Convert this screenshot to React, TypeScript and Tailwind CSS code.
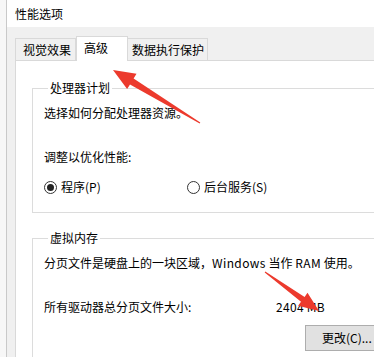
const font = "font-['Microsoft_YaHei','Noto_Sans_CJK_SC',sans-serif]";

function Radio({ checked, label }: { checked?: boolean; label: string }) {
  return (
    <label className="flex items-center gap-[4px]">
      <span className="flex h-[13px] w-[13px] items-center justify-center rounded-full border border-[#333333] bg-white">
        {checked && <span className="h-[7px] w-[7px] rounded-full bg-[#222222]" />}
      </span>
      <span>{label}</span>
    </label>
  );
}

function GroupBox({ title, children, className = '' }: { title: string; children: React.ReactNode; className?: string }) {
  return (
    <fieldset className={`w-[360px] border border-[#dcdcdc] px-[11px] ${className}`}>
      <legend className="ml-[4px] px-[2px] leading-[16px]">{title}</legend>
      {children}
    </fieldset>
  );
}

export default function App() {
  return (
    <div className={`relative flex h-[357px] w-[374px] overflow-hidden bg-[#f0f0f0] text-[12px] leading-[16px] text-black ${font}`}>
      <div className="w-[7px] shrink-0 border-r border-[#c9c9c9] bg-[#f7f7f7]" />

      <div className="flex min-w-0 flex-1 flex-col">
        {/* title bar */}
        <div className="flex h-[27px] shrink-0 items-center bg-white pl-[8px] pt-[1px]">性能选项</div>

        {/* tabs */}
        <div className="flex h-[33px] shrink-0 items-end pl-[8px]">
          <div className="flex h-[22px] items-center border border-b-0 border-[#d9d9d9] bg-[#f0f0f0] pl-[7px] pr-[4px]">视觉效果</div>
          <div className="relative z-10 -mb-px flex h-[25px] items-center border border-b-0 border-[#d9d9d9] bg-white pb-[3px] pl-[7px] pr-[19px]">高级</div>
          <div className="flex h-[22px] items-center border border-b-0 border-l-0 border-[#d9d9d9] bg-[#f0f0f0] pl-[4px] pr-[3px]">数据执行保护</div>
        </div>

        {/* tab page */}
        <div className="ml-[8px] flex-1 border-l border-t border-[#d9d9d9] bg-white pl-[16px] pt-[19px]">
          <GroupBox title="处理器计划" className="pb-[17px]">
            <div className="mt-[9px]">选择如何分配处理器资源。</div>
            <div className="mt-[28px]">调整以优化性能:</div>
            <div className="mt-[14px] flex">
              <div className="w-[143px]">
                <Radio checked label="程序(P)" />
              </div>
              <Radio label="后台服务(S)" />
            </div>
          </GroupBox>

          <GroupBox title="虚拟内存" className="mt-[17px] pb-[20px]">
            <div className="mt-[9px] whitespace-nowrap">
              分页文件是硬盘上的一块区域，<span className="tracking-[0.4px]">Windows</span> 当作 <span className="tracking-[0.4px]">RAM</span> 使用。
            </div>
            <div className="mt-[28px] flex">
              <div className="w-[232px]">所有驱动器总分页文件大小:</div>
              <div className="tracking-[0.3px]">2404 MB</div>
            </div>
            <div className="mt-[10px] pl-[261px]">
              <button className="flex h-[26px] w-[100px] items-center border border-[#adadad] bg-[#e1e1e1] pl-[16px]">更改(C)...</button>
            </div>
          </GroupBox>
        </div>
      </div>

      {/* annotation arrows */}
      <svg className="pointer-events-none absolute left-0 top-0" width="374" height="357" viewBox="0 0 374 357">
        <polygon
          points="113,70 136.5,73.7 133.6,78.4 200.3,122.6 199.7,123.4 130,84.4 127.1,89.1"
          fill="#ec3a2d"
        />
        <polygon
          points="319,311 298.1,305.8 301,301.7 264.7,272.4 265.3,271.6 304.6,296.9 307.5,292.8"
          fill="#ec3a2d"
        />
      </svg>
    </div>
  );
}
